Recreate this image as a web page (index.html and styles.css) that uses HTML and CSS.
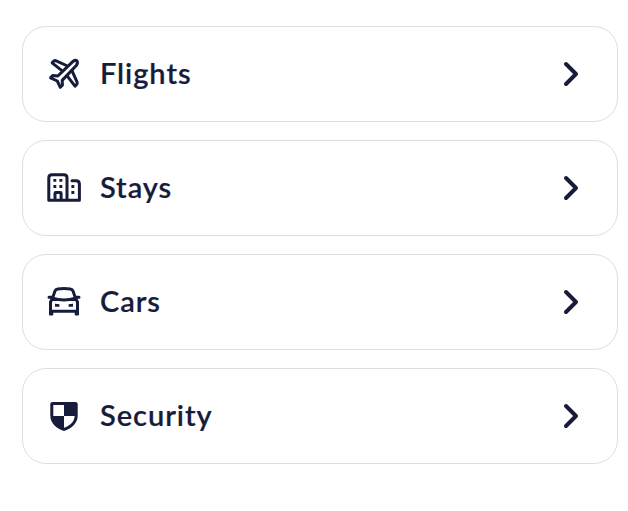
FILE: index.html
```html
<!DOCTYPE html>
<html lang="en">
<head>
<meta charset="utf-8">
<title>Travel categories</title>
<link rel="stylesheet" href="styles.css">
</head>
<body>
<nav class="menu">
  <a class="card">
    <svg class="icon" viewBox="0 0 40 40">
      <path d="M22.5 11.5 11.6 6.7Q10.6 6.4 9.8 7.1L8.1 8.8 17.3 16.2M28.3 17.3 33.1 28.2Q33.5 29.3 32.8 30.2L31 32.2 23.5 22.3"/>
      <path d="M13.8 22 29 7.4Q31.2 5.7 32.9 6.8Q34.1 8.7 32.5 11.2L18.2 26.4 18.4 31.2 16.3 33.3 13.3 27 6.6 23.8 8.7 21.6Z"/>
    </svg>
    <span class="label">Flights</span>
    <svg class="chevron" viewBox="0 0 20 28"><path d="M5 4 15 14 5 24"/></svg>
  </a>
  <a class="card">
    <svg class="icon" viewBox="0 0 40 40">
      <path d="M23 32.2H4.8V9.8Q4.8 6.8 7.8 6.8H20Q23 6.8 23 9.8ZM23 32.2H35.4V16Q35.4 12.8 32.2 12.8H28M11 32V25.4Q11 24.6 11.8 24.6H16.3Q17.1 24.6 17.1 25.4V32"/>
      <path class="solid" d="M9.4 10.9h2.9v2.9H9.4zM15.4 10.9h2.9v2.9h-2.9zM9.4 17h2.9v2.9H9.4zM15.4 17h2.9v2.9h-2.9zM27.4 17h2.9v2.9h-2.9zM27.4 23h2.9v2.9h-2.9z"/>
    </svg>
    <span class="label">Stays</span>
    <svg class="chevron" viewBox="0 0 20 28"><path d="M5 4 15 14 5 24"/></svg>
  </a>
  <a class="card">
    <svg class="icon" viewBox="0 0 40 40">
      <path d="M8.5 16.2 10.9 9.2Q11.6 7.2 13.7 6.9Q20 6.1 26.3 6.9Q28.4 7.2 29.1 9.2L31.5 16.2M8.5 16.2Q20 19.6 31.5 16.2M8.5 16.2 6.5 20V29.2H33.5V20L31.5 16.2M5 15.3H8.5M31.5 15.3H35"/>
      <path class="solid" d="M5 28h4.3v4.5q0 1-1 1H6q-1 0-1-1zM30.7 28H35v4.5q0 1-1 1h-2.3q-1 0-1-1zM11 21.7l4.4.5v2.6H11zM29 21.7l-4.4.5v2.6H29z"/>
    </svg>
    <span class="label">Cars</span>
    <svg class="chevron" viewBox="0 0 20 28"><path d="M5 4 15 14 5 24"/></svg>
  </a>
  <a class="card">
    <svg class="icon" viewBox="0 0 40 40">
      <path class="solid" d="M8.5 6H31.5Q33.7 6 33.7 8.2V19.5C33.7 27.8 27.2 32.4 20 35C12.8 32.4 6.3 27.8 6.3 19.5V8.2Q6.3 6 8.5 6Z"/>
      <path class="paper" d="M9.3 9H20V20H9.3zM20 20H30.7C30.2 26.5 25.7 29.6 20 31.8Z"/>
    </svg>
    <span class="label">Security</span>
    <svg class="chevron" viewBox="0 0 20 28"><path d="M5 4 15 14 5 24"/></svg>
  </a>
</nav>
</body>
</html>
```
FILE: styles.css
```css
body {
  margin: 0;
  background: #fff;
  color: #161c3a;
  font-family: Lato, sans-serif;
}

.menu {
  display: flex;
  flex-direction: column;
  gap: 18px;
  padding: 26px 10px 0 22px;
}

.card {
  box-sizing: border-box;
  display: flex;
  align-items: center;
  height: 96px;
  padding: 0 36px 0 21px;
  border: 1px solid #dfdfdf;
  border-radius: 24px;
}

.icon {
  width: 40px;
  height: 40px;
}

.icon,
.chevron {
  flex: none;
  fill: none;
  stroke: currentColor;
  stroke-width: 3;
  stroke-linejoin: round;
  stroke-linecap: round;
}

.solid {
  fill: currentColor;
  stroke: none;
}

.paper {
  fill: #fff;
  stroke: none;
}

.label {
  flex: 1;
  margin-left: 16px;
  padding-bottom: 2px;
  font-size: 29px;
  font-weight: 600;
  line-height: 36px;
  letter-spacing: 0.95px;
  -webkit-text-stroke: 0.2px currentColor;
}

.chevron {
  width: 20px;
  height: 28px;
  stroke-width: 4;
}
```
